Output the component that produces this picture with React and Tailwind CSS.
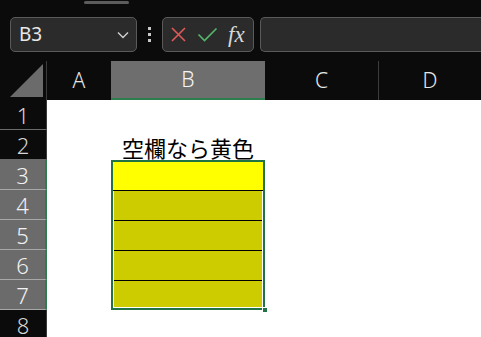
import React from "react";

const ui = { fontFamily: '"Segoe UI", "Noto Sans", "DejaVu Sans", sans-serif' };

function RowHeader({ n, selected }) {
  return (
    <div
      className={
        "flex items-center justify-center text-[22px] font-light leading-none border-b " +
        (selected
          ? "bg-[#6b6b6b] text-[#f2f2f2] border-[#a8a8a8] border-r-2 border-r-[#2e7d4f]"
          : "bg-[#0b0b0b] text-[#d6d6d6] border-[#6a6a6a] border-r border-r-[#3a3a3a]")
      }
      style={{ gridColumnStart: 1, gridRowStart: n }}
    >
      {n}
    </div>
  );
}

export default function App() {
  const rows = [1, 2, 3, 4, 5, 6, 7, 8];
  return (
    <div className="w-[481px] h-[337px] overflow-hidden bg-white" style={ui}>
      {/* Toolbar */}
      <div className="h-[61px] bg-[#0b0b0b] flex flex-col">
        <div className="ml-[84px] mt-px w-[45px] h-[3px] rounded-full bg-[#5c5c5c]" />
        <div className="flex items-center mt-[13px] h-[35px]">
          <div className="ml-[10px] w-[127px] h-[35px] rounded-[5px] border border-[#5a5a5a] bg-[#2b2b2b] flex items-center justify-between pl-[8px] pr-[7px]">
            <span className="text-[19px] text-[#e8e8e8] leading-none">B3</span>
            <svg width="12" height="8" viewBox="0 0 12 8">
              <path d="M1 1.5 L6 6.5 L11 1.5" fill="none" stroke="#d0d0d0" strokeWidth="1.4" />
            </svg>
          </div>
          <div className="w-[25px] flex flex-col items-center gap-[3px]">
            <span className="w-[3px] h-[3px] bg-[#c8c8c8]" />
            <span className="w-[3px] h-[3px] bg-[#c8c8c8]" />
            <span className="w-[3px] h-[3px] bg-[#c8c8c8]" />
          </div>
          <div className="w-[92px] h-[35px] rounded-[5px] border border-[#5a5a5a] bg-[#2b2b2b] flex items-center pl-[7px] gap-[10px]">
            <svg width="17" height="17" viewBox="0 0 17 17">
              <path d="M2 2 L15 15 M15 2 L2 15" stroke="#e05a5a" strokeWidth="1.6" />
            </svg>
            <svg width="21" height="15" viewBox="0 0 21 15">
              <path d="M1.5 7.5 L7.5 13.5 L19.5 1.5" fill="none" stroke="#55b56a" strokeWidth="1.6" />
            </svg>
            <span
              className="text-[23px] italic text-[#d8d8d8] leading-none"
              style={{ fontFamily: '"Liberation Serif", "DejaVu Serif", serif' }}
            >
              fx
            </span>
          </div>
          <div className="ml-[6px] flex-1 h-[35px] rounded-l-[5px] border border-r-0 border-[#5a5a5a] bg-[#2b2b2b]" />
        </div>
      </div>

      {/* Column headers */}
      <div className="grid grid-cols-[47px_64px_154px_114px_1fr] h-[39px] bg-[#0b0b0b] text-[21px] font-light leading-none">
        <div className="flex items-end justify-end pr-[3px] pb-[3px] border-r border-[#3c3c3c]">
          <svg width="33" height="33" viewBox="0 0 33 33">
            <path d="M0 33 L33 33 L33 0 Z" fill="#6b6b6b" />
          </svg>
        </div>
        <div className="flex items-center justify-center text-[#e6e6e6]">A</div>
        <div className="flex items-center justify-center bg-[#6e6e6e] text-[#f5f5f5] border-b-2 border-[#2e7d4f]">B</div>
        <div className="flex items-center justify-center text-[#e6e6e6] border-r border-[#3c3c3c]">C</div>
        <div className="flex items-center justify-center text-[#e6e6e6]">D</div>
      </div>

      {/* Sheet body */}
      <div className="grid grid-cols-[47px_64px_154px_114px_1fr] grid-rows-[repeat(8,30px)]">
        {rows.map((n) => (
          <RowHeader key={n} n={n} selected={n >= 3 && n <= 7} />
        ))}

        <div className="col-start-3 row-start-2 flex items-end justify-center pb-[2px]">
          <span
            className="text-[22px] leading-none text-black"
            style={{ fontFamily: '"Noto Sans CJK JP", "Noto Sans", sans-serif' }}
          >
            空欄なら黄色
          </span>
        </div>

        <div className="col-start-3 row-start-3 row-span-5 relative border-2 border-[#217346] bg-white flex flex-col">
          <div className="h-[29px] bg-[#ffff00] border-b border-black" />
          <div className="h-[30px] mx-px bg-[#cccc00] border-b border-black" />
          <div className="h-[30px] mx-px bg-[#cccc00] border-b border-black" />
          <div className="h-[30px] mx-px bg-[#cccc00] border-b border-black" />
          <div className="flex-1 mx-px mb-px bg-[#cccc00]" />
          <div className="absolute -right-[5px] -bottom-[5px] w-[6px] h-[6px] bg-[#217346] border border-white" />
        </div>
      </div>
    </div>
  );
}
